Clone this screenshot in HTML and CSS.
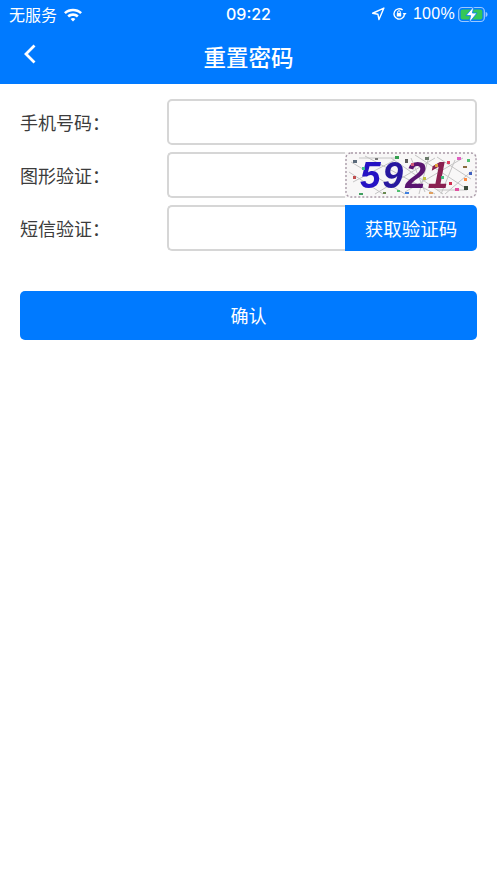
FILE: index.html
```html
<!DOCTYPE html>
<html lang="zh-CN">
<head>
    <meta charset="UTF-8">
    <meta name="viewport" content="width=device-width, initial-scale=1.0">
    <title>重置密码</title>
    <link rel="stylesheet" href="styles.css">
</head>
<body>
    <!-- 顶部 -->
    <header class="top">
        <div class="status">
            <div class="status-left">
                <span class="carrier">无服务</span>
                <svg class="wifi" width="20" height="15" viewBox="0 0 20 15">
                    <path d="M1 5.2C5.8.6 14.2.6 19 5.2l-1.8 1.9C13.2 3.4 6.8 3.4 2.8 7.1z" fill="#fff"/>
                    <path d="M4.3 8.6c3.2-3 8.2-3 11.4 0l-1.8 1.9c-2.2-2-5.6-2-7.8 0z" fill="#fff"/>
                    <path d="M7.6 12c1.4-1.3 3.4-1.3 4.8 0L10 14.6z" fill="#fff"/>
                </svg>
            </div>
            <span class="clock">09:22</span>
            <div class="status-right">
                <svg class="arrow" width="14" height="14" viewBox="0 0 13 13">
                    <path d="M12 1 1.5 5.8l4.9.9 1 4.9z" fill="none" stroke="#fff" stroke-width="1.3" stroke-linejoin="round"/>
                </svg>
                <svg width="15" height="14" viewBox="0 0 15 14">
                    <path d="M12.4 7A5.2 5.2 0 1 1 10.6 3" fill="none" stroke="#fff" stroke-width="1.4"/>
                    <path d="M10.6 6h4l-2 2.6z" fill="#fff"/>
                    <rect x="4.8" y="6" width="4.4" height="3.6" rx=".6" fill="#fff"/>
                    <path d="M5.7 6V5a1.3 1.3 0 0 1 2.6 0v1" fill="none" stroke="#fff"/>
                </svg>
                <span class="percent">100%</span>
                <svg width="30" height="17" viewBox="0 0 30 17">
                    <rect x=".7" y="1.5" width="25.6" height="14" rx="3.6" fill="none" stroke="#9cc8ff" stroke-width="1.2"/>
                    <rect x="2.6" y="3.4" width="21.8" height="10.2" rx="2" fill="#35c759"/>
                    <path d="M27.6 6c1.2.3 1.9 1.2 1.9 2.5s-.7 2.2-1.9 2.5z" fill="#9cc8ff"/>
                    <path d="M16 0 8 9.6h4.6L11 17l8-10h-4.6z" fill="#fff" stroke="#007aff" stroke-width=".8"/>
                </svg>
            </div>
        </div>
        <div class="nav">
            <svg class="back" width="14" height="22" viewBox="0 0 14 22">
                <path d="M11.5 2.5 3 11l8.5 8.5" fill="none" stroke="#fff" stroke-width="2.8"/>
            </svg>
            <h1>重置密码</h1>
        </div>
    </header>

    <!-- 表单 -->
    <main class="form">
        <div class="row">
            <label>手机号码：</label>
            <div class="field"><input class="full" type="text"></div>
        </div>
        <div class="row">
            <label>图形验证：</label>
            <div class="field">
                <input type="text">
                <svg class="captcha" width="132" height="46" viewBox="0 0 132 46">
                    <rect width="132" height="46" fill="#f8f7f7"/>
                    <rect x="1" y="1" width="130" height="44" rx="5" fill="none" stroke="#a99aa8" stroke-width="1.4" stroke-dasharray="2 2"/>
                    <g stroke="#c4c4c4" stroke-width="1">
                        <path d="M6 10 60 42M20 4l70 38M46 6l52 36M70 3l52 34M92 5l34 22M8 30 50 8M60 40 118 6M30 42 90 6M100 42l28-24M4 20l34 22"/>
                        <path d="M66 6 80 40M84 4 74 42M110 8 96 42M14 6h36M92 38h30"/>
                    </g>
                    <text class="digits" x="15" y="36"><tspan fill="#2512c4">5</tspan><tspan fill="#28189f">9</tspan><tspan fill="#5a1470">2</tspan><tspan fill="#8a2050">1</tspan></text>
                    <g>
                        <rect x="8" y="8" width="4" height="3" fill="#5a6a7a"/>
                        <rect x="17" y="15" width="3" height="3" fill="#3fbf8f"/>
                        <rect x="30" y="6" width="3" height="2" fill="#777"/>
                        <rect x="50" y="4" width="4" height="3" fill="#35a050"/>
                        <rect x="60" y="7" width="3" height="4" fill="#5a5a5a"/>
                        <rect x="66" y="11" width="3" height="3" fill="#d05a7a"/>
                        <rect x="80" y="5" width="4" height="3" fill="#6a7a6a"/>
                        <rect x="90" y="12" width="3" height="3" fill="#e0a040"/>
                        <rect x="102" y="9" width="3" height="3" fill="#e04060"/>
                        <rect x="112" y="5" width="4" height="3" fill="#e060c0"/>
                        <rect x="122" y="7" width="3" height="3" fill="#50c070"/>
                        <rect x="118" y="14" width="4" height="2" fill="#8a6a40"/>
                        <rect x="124" y="20" width="3" height="3" fill="#4060c0"/>
                        <rect x="119" y="26" width="3" height="3" fill="#ff8a40"/>
                        <rect x="104" y="30" width="3" height="3" fill="#d03050"/>
                        <rect x="96" y="24" width="3" height="3" fill="#40c080"/>
                        <rect x="78" y="25" width="3" height="3" fill="#c0c040"/>
                        <rect x="119" y="34" width="4" height="4" fill="#3a4a3a"/>
                        <rect x="110" y="36" width="4" height="3" fill="#e050a0"/>
                        <rect x="52" y="38" width="3" height="2" fill="#50c070"/>
                        <rect x="38" y="40" width="3" height="2" fill="#6a8a50"/>
                        <rect x="14" y="41" width="4" height="2" fill="#40a060"/>
                        <rect x="8" y="24" width="3" height="3" fill="#c05050"/>
                        <rect x="60" y="40" width="4" height="2" fill="#4080e0"/>
                        <rect x="84" y="40" width="4" height="2" fill="#e0a060"/>
                    </g>
                </svg>
            </div>
        </div>
        <div class="row">
            <label>短信验证：</label>
            <div class="field">
                <input type="text">
                <button class="code-btn" type="button">获取验证码</button>
            </div>
        </div>
        <button class="confirm" type="button">确认</button>
    </main>
</body>
</html>
```

FILE: styles.css
```css
body {
    margin: 0;
    background-color: #fff;
    font-family: "Noto Sans CJK SC", "Liberation Sans", sans-serif;
    color: #3c3c3c;
}

/* 顶部 */
.top {
    height: 84px;
    background-color: #007aff;
    color: #fff;
}
.status {
    height: 28px;
    padding: 0 9px;
    display: grid;
    grid-template-columns: 1fr auto 1fr;
    align-items: center;
}
.status-left {
    display: flex;
    align-items: center;
    gap: 6px;
}
.carrier {
    font-size: 16px;
}
.clock {
    font-family: "Inter", sans-serif;
    font-size: 16px;
    font-weight: 500;
}
.status-right {
    display: flex;
    align-items: center;
    justify-content: flex-end;
    gap: 5px;
}
.arrow {
    margin-right: 2px;
}
.percent {
    font-family: "Liberation Sans", sans-serif;
    font-size: 16px;
    letter-spacing: 0.3px;
    margin-left: 1px;
    margin-right: -2px;
}
.nav {
    height: 56px;
    position: relative;
    display: flex;
    align-items: center;
    justify-content: center;
}
.nav h1 {
    margin: 0;
    font-size: 22.5px;
    font-weight: 500;
    line-height: 52px;
}
.back {
    position: absolute;
    left: 23px;
    top: 15px;
}

/* 表单 */
.form {
    padding: 15px 20px 0;
    display: flex;
    flex-direction: column;
}
.row {
    display: flex;
    align-items: center;
    height: 46px;
    margin-bottom: 7px;
}
.row label {
    width: 147px;
    flex: none;
    font-size: 18px;
}
.field {
    flex: 1;
    min-width: 0;
    height: 46px;
    display: flex;
}
.field input {
    flex: 1;
    width: 0;
    min-width: 0;
    box-sizing: border-box;
    border: 2px solid #d6d6d6;
    border-right: none;
    border-radius: 5px 0 0 5px;
    outline: none;
    padding: 0 8px;
    background: transparent;
}
.field input.full {
    border-right: 2px solid #d6d6d6;
    border-radius: 5px;
}
.captcha {
    flex: none;
    border-radius: 0 5px 5px 0;
    filter: blur(0.5px);
}
.digits {
    font-family: "Liberation Sans", sans-serif;
    font-size: 37px;
    font-weight: bold;
    font-style: italic;
    letter-spacing: 2px;
}
.code-btn {
    flex: none;
    width: 132px;
    height: 46px;
    border: none;
    border-radius: 0 5px 5px 0;
    background-color: #007aff;
    color: #fff;
    font-family: inherit;
    font-size: 18.5px;
    padding: 0;
}
.confirm {
    height: 49px;
    margin-top: 33px;
    border: none;
    border-radius: 5px;
    background-color: #007aff;
    color: #fff;
    font-family: inherit;
    font-size: 18px;
    padding: 0 0 1px;
}
```
